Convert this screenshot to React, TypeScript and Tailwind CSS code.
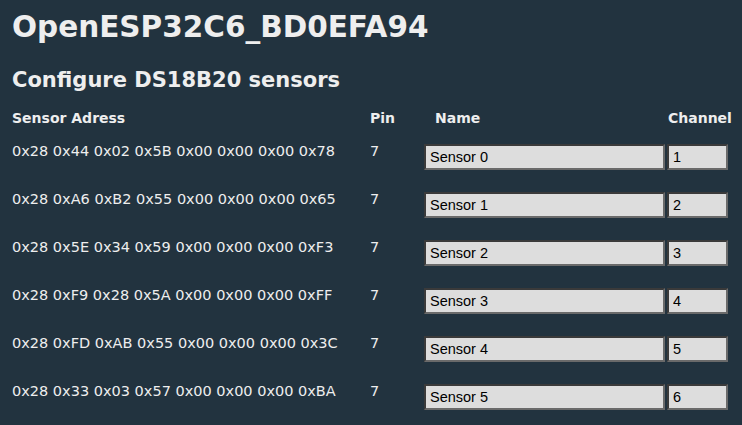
const sensors = [
  { addr: '0x28 0x44 0x02 0x5B 0x00 0x00 0x00 0x78', pin: 7, name: 'Sensor 0', ch: 1 },
  { addr: '0x28 0xA6 0xB2 0x55 0x00 0x00 0x00 0x65', pin: 7, name: 'Sensor 1', ch: 2 },
  { addr: '0x28 0x5E 0x34 0x59 0x00 0x00 0x00 0xF3', pin: 7, name: 'Sensor 2', ch: 3 },
  { addr: '0x28 0xF9 0x28 0x5A 0x00 0x00 0x00 0xFF', pin: 7, name: 'Sensor 3', ch: 4 },
  { addr: '0x28 0xFD 0xAB 0x55 0x00 0x00 0x00 0x3C', pin: 7, name: 'Sensor 4', ch: 5 },
  { addr: '0x28 0x33 0x03 0x57 0x00 0x00 0x00 0xBA', pin: 7, name: 'Sensor 5', ch: 6 },
]

export default function App() {
  return (
    <div className="min-h-screen bg-[#22333f] text-[#eeeeee] pl-3 pt-[9px] font-['DejaVu_Sans',sans-serif]">
      <h1 className="text-[29.5px] font-bold leading-[36px]">OpenESP32C6_BD0EFA94</h1>
      <h2 className="text-[21px] font-bold leading-[28px] mt-[21px]">Configure DS18B20 sensors</h2>

      {/* Header */}
      <div className="flex items-center mt-[14px] h-[20px] text-[14px] font-bold">
        <div className="w-[358px]">Sensor Adress</div>
        <div className="w-[65px]">Pin</div>
        <div className="w-[233px]">Name</div>
        <div>Channel</div>
      </div>

      {/* Rows */}
      <div className="flex flex-col">
        {sensors.map((s) => (
          <div key={s.name} className="flex h-[48px] text-[14.5px] leading-[18px]">
            <div className="w-[358px] pt-[14px]">{s.addr}</div>
            <div className="w-[54px] pt-[14px]">{s.pin}</div>
            <div className="pt-[16px] flex gap-[2px]">
              <input
                defaultValue={s.name}
                className="w-[241px] h-[26px] bg-[#dddddd] border-2 border-t-[#3a3a3a] border-l-[#3a3a3a] border-b-[#6a6a6a] border-r-[#6a6a6a] px-[4px] text-[14.5px] text-black font-['Liberation_Sans',sans-serif]"
              />
              <input
                defaultValue={String(s.ch)}
                className="w-[61px] h-[26px] bg-[#dddddd] border-2 border-t-[#3a3a3a] border-l-[#3a3a3a] border-b-[#6a6a6a] border-r-[#6a6a6a] px-[4px] text-[14.5px] text-black font-['Liberation_Sans',sans-serif]"
              />
            </div>
          </div>
        ))}
      </div>
    </div>
  )
}
